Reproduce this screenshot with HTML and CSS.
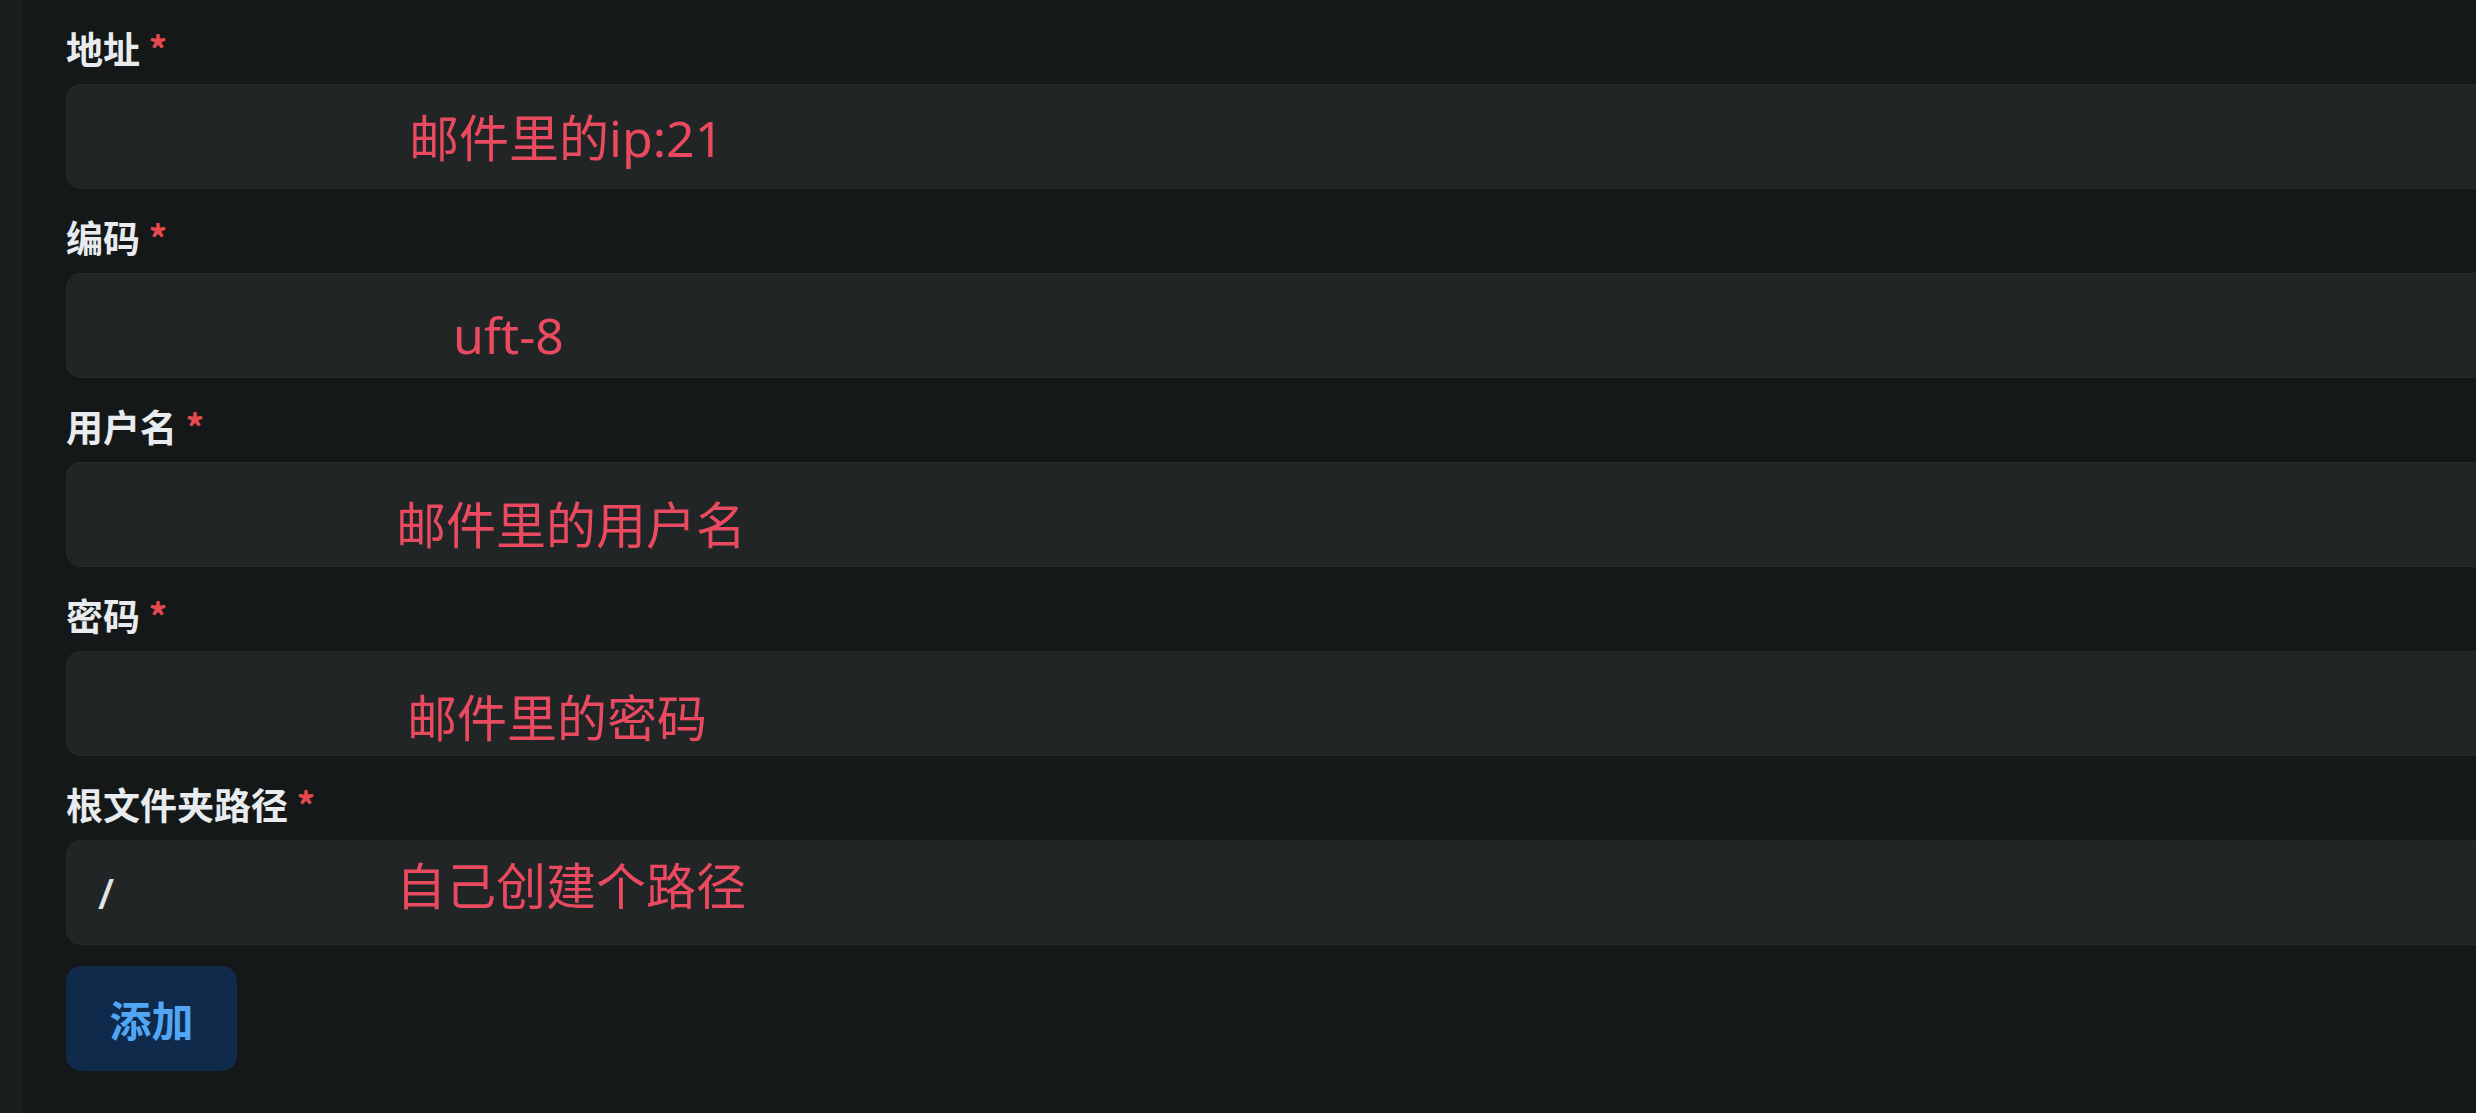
FILE: index.html
```html
<!DOCTYPE html>
<html lang="zh-CN">
<head>
  <meta charset="UTF-8" />
  <title>添加 FTP</title>
  <link rel="stylesheet" href="styles.css">
</head>
<body>
  <div class="page">
    <aside class="rail"></aside>

    <form class="ftp-form">
      <div class="field">
        <label class="field-label">地址 <span class="req">*</span></label>
        <div class="input">
          <span class="note note-ip">邮件里的ip:21</span>
        </div>
      </div>

      <div class="field">
        <label class="field-label">编码 <span class="req">*</span></label>
        <div class="input">
          <span class="note note-enc">uft-8</span>
        </div>
      </div>

      <div class="field">
        <label class="field-label">用户名 <span class="req">*</span></label>
        <div class="input">
          <span class="note note-user">邮件里的用户名</span>
        </div>
      </div>

      <div class="field">
        <label class="field-label">密码 <span class="req">*</span></label>
        <div class="input">
          <span class="note note-pass">邮件里的密码</span>
        </div>
      </div>

      <div class="field">
        <label class="field-label">根文件夹路径 <span class="req">*</span></label>
        <div class="input">
          <span class="value">/</span>
          <span class="note note-path">自己创建个路径</span>
        </div>
      </div>

      <button type="button" class="btn-add">添加</button>
    </form>
  </div>
</body>
</html>
```

FILE: styles.css
```css
html, body { margin: 0; height: 100%; background: #151818; overflow: hidden; }
.page { display: flex; min-height: 100%; }
.rail { width: 22px; flex-shrink: 0; background: #1b1e1f; }
.ftp-form { flex: 1; padding: 21px 0 0 44px; display: flex; flex-direction: column; gap: 21px; }

.field { display: flex; flex-direction: column; }
.field-label { font-family: "Noto Sans CJK SC", sans-serif; font-weight: 700; font-size: 37px; line-height: 55px; color: #e9ecef; margin-bottom: 8px; }
.req { color: #e5484d; }

.input { position: relative; height: 105px; box-sizing: border-box; background: #212526; border: 1px solid #262a2b; border-right: none; border-radius: 15px 0 0 15px; display: flex; align-items: center; padding: 0 31px; }
.value { font-family: "Noto Sans", sans-serif; font-weight: 500; font-size: 42px; color: #e2e5e8; }

/* red hand notes lying over the inputs */
.note { position: absolute; font-family: "Noto Sans", "Noto Sans CJK SC", sans-serif; font-size: 50px; line-height: 1; color: #ea4a5f; white-space: nowrap; }
.note-ip { left: 342px; top: 28px; }
.note-enc { left: 386px; top: 36px; }
.note-user { left: 329px; top: 37px; }
.note-pass { left: 340px; top: 41px; }
.note-path { left: 329px; top: 20px; }

.btn-add { align-self: flex-start; width: 171px; height: 105px; border: none; border-radius: 15px; background: #0f2a4a; color: #52a7f5; font-family: "Noto Sans CJK SC", sans-serif; font-weight: 700; font-size: 42px; padding: 0; }
```
